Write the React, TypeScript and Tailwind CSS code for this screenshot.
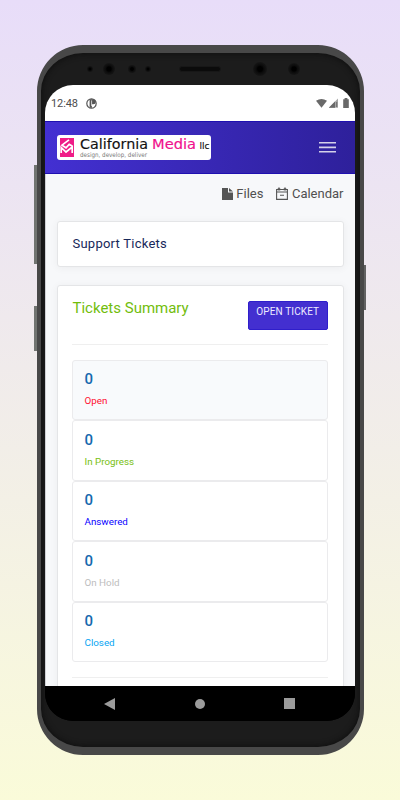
import clsx from "clsx";

interface TicketStatus {
  label: string;
  count: number;
  color: string;
}

const STATUSES: TicketStatus[] = [
  { label: "Open", count: 0, color: "text-[#ff1030]" },
  { label: "In Progress", count: 0, color: "text-[#78c010]" },
  { label: "Answered", count: 0, color: "text-[#0a00ff]" },
  { label: "On Hold", count: 0, color: "text-[#bdbdbd]" },
  { label: "Closed", count: 0, color: "text-[#08a5f2]" },
];

const Lens = ({ className }: { className: string }) => (
  <span
    className={clsx(
      "absolute rounded-full bg-[radial-gradient(circle,#000_25%,#0b0b0b_40%,#141414_65%)]",
      className
    )}
  />
);

const StatusBar = () => (
  <div className="flex h-9 shrink-0 items-center bg-white pl-[6.5px] pr-[5px] text-[#4c4c4c]">
    <span className="pt-px text-[11px] leading-4 tracking-[-0.1px]">12:48</span>
    <svg className="ml-[8px]" width="11" height="11" viewBox="0 0 11 11">
      <circle cx="5.5" cy="5.5" r="4.7" fill="none" stroke="#555" strokeWidth="1.2" />
      <path d="M3.6 1.2h3.6a2.2 2.2 0 0 1 0 5H6v3.6H3.6z" fill="#555" />
      <path d="M5.6 2.4v5.8" stroke="#eee" strokeWidth=".8" />
    </svg>
    <svg className="ml-auto" width="34" height="11" viewBox="0 0 34 11" fill="#696969">
      <path d="M0 2.8Q5.5-1 11 2.8L5.5 9.8z" />
      <path d="M22 .5v9.2h-9.2z" opacity=".6" />
      <path d="M19 3.5v6.2h-6.2zM20.2 4h1v5h-1z" />
      <path d="M28.6 0h2.8v1.2h1.4v8.7h-5.6V1.2h1.4z" />
    </svg>
  </div>
);

const Logo = () => (
  <svg
    className="rounded-[3px] bg-white"
    width="154"
    height="25"
    viewBox="0 0 154 25"
    fontFamily="'DejaVu Sans', sans-serif"
  >
    <path d="M3 3h14v19H3z" fill="#ef1c88" />
    <path
      d="M12 4.8L5 10.2l4 2.6 3.2-3.4 3 1.6M4.2 18v-5.5L9 17l6.2-5V18"
      fill="none"
      stroke="#fff"
      strokeWidth="1.7"
    />
    <g fill="#111" stroke="#111" strokeWidth=".15">
      <text x="23" y="13.8" fontSize="14.5" textLength="68" lengthAdjust="spacingAndGlyphs">
        California
      </text>
      <text x="142.5" y="13.8" fontSize="9.5" textLength="10" lengthAdjust="spacingAndGlyphs">
        llc
      </text>
    </g>
    <text
      x="95"
      y="13.8"
      fontSize="14.5"
      textLength="44"
      lengthAdjust="spacingAndGlyphs"
      fill="#f0108c"
      stroke="#f0108c"
      strokeWidth=".15"
    >
      Media
    </text>
    <text x="23" y="21.6" fontSize="6.4" textLength="67" lengthAdjust="spacingAndGlyphs" fill="#777">
      design, develop, deliver
    </text>
  </svg>
);

const Header = () => (
  <header className="flex h-[53px] shrink-0 items-center justify-between border-y border-[#1f10b0] bg-linear-to-r from-[#4330d2] to-[#2e209b] pl-3 pr-[19px]">
    <Logo />
    <svg width="17" height="11" viewBox="0 0 17 11" fill="#d4d1e9">
      <path d="M0 0h17v1.6H0zM0 4.6h17v1.6H0zM0 9h17v1.6H0z" />
    </svg>
  </header>
);

const QuickLinks = () => (
  <nav className="flex h-[15px] items-center justify-end text-[13px] text-[#505050]">
    <svg width="11" height="12" viewBox="0 0 11 12" fill="#555">
      <path d="M0 0h6v4.5h5V12H0zM7 0l4 3.6H7z" />
    </svg>
    <span className="ml-[3px] pt-px">Files</span>
    <svg
      className="ml-[13px]"
      width="12"
      height="13"
      viewBox="0 0 12 13"
      fill="none"
      stroke="#555"
    >
      <path d="M.6 2.5h10.8v9.9H.6zM.6 5h10.8M4 8.2h4" strokeWidth="1.1" />
      <path d="M2.3 3.5V1h1.4v2.5M8.3 3.5V1h1.4v2.5" strokeWidth="1" />
    </svg>
    <span className="ml-[3.5px] pt-px">Calendar</span>
  </nav>
);

const StatusItem = ({ label, count, color, active }: TicketStatus & { active: boolean }) => (
  <li
    className={clsx(
      "flex h-[60.5px] flex-col rounded-[3px] border border-[#ebebed] pl-[11.5px] pt-[8.5px]",
      active ? "bg-[#f8fafc]" : "bg-white"
    )}
  >
    <span className="text-[15px] font-medium leading-5 text-[#1569ae]">{count}</span>
    <span className={clsx("mt-[5px] text-[9.8px] leading-[14px]", color)}>{label}</span>
  </li>
);

const TicketsSummary = () => (
  <section className="mt-[18px] h-[430px] shrink-0 rounded-[3px] border border-[#e4e5e7] bg-white px-[14.5px] shadow-[0_1px_8px_rgba(0,0,0,0.05)]">
    <div className="flex h-[58.5px] items-start justify-between border-b border-[#efefef] pt-[14px]">
      <h2 className="pl-[0.5px] text-[15px] leading-[17px] text-[#72bd0c]">Tickets Summary</h2>
      <button className="mt-[0.5px] flex h-[29px] w-[80.5px] justify-center rounded-[2px] border border-[#2f1ecb] bg-[#432fd0] pt-[3.5px] text-[10px] leading-[14px] tracking-[0.12px] text-[#edeaff]">
        OPEN TICKET
      </button>
    </div>
    <ul className="mt-[15px]">
      {STATUSES.map((status, i) => (
        <StatusItem key={status.label} {...status} active={i === 0} />
      ))}
    </ul>
    <hr className="mt-[14.5px] border-[#efefef]" />
  </section>
);

const NavigationBar = () => (
  <div className="flex h-[35px] shrink-0 items-center justify-between bg-black pl-[59px] pr-[60px]">
    <svg width="11" height="12" viewBox="0 0 11 12" fill="#9b9b9b">
      <path d="M11 0v12L0 6z" />
    </svg>
    <span className="ml-px size-[10px] rounded-full bg-[#9b9b9b]" />
    <span className="size-[11px] bg-[#9b9b9b]" />
  </div>
);

export default function App() {
  return (
    <div className="flex h-[800px] w-[400px] justify-center bg-linear-to-b from-[#e8ddf9] to-[#fafbd9] pt-[45px] font-['Roboto',sans-serif]">
      <div className="relative flex h-[710px] w-[327px] flex-col px-2 pt-[40px]">
        {/* hardware buttons */}
        <span className="absolute -left-[3px] top-[120px] h-[99px] w-[3px] bg-[#717471]" />
        <span className="absolute -left-[3px] top-[261px] h-[45px] w-[3px] bg-[#717471]" />
        <span className="absolute -right-[2px] top-[220px] h-[45px] w-[2px] bg-[#626262]" />
        {/* front glass */}
        <span className="absolute inset-0 rounded-[46px] border-x-[4px] border-y-[8px] border-[#484848] bg-[#1c1c1c] shadow-[inset_0_0_6px_#0c0c0c]" />
        <Lens className="left-[50px] top-[21px] size-[6px]" />
        <Lens className="left-[66px] top-[18px] size-[12px]" />
        <Lens className="left-[91px] top-[20px] size-[8px]" />
        <Lens className="left-[108px] top-[21px] size-[6px]" />
        <span className="absolute left-[142px] top-[21px] h-[6px] w-[42px] rounded-full border border-[#171717] bg-[#0b0b0b]" />
        <Lens className="left-[216px] top-[17px] size-[14px]" />
        <Lens className="left-[251px] top-[18px] size-[12px]" />

        <main className="relative flex h-[636px] w-[310px] flex-col overflow-hidden rounded-[28px] bg-black">
          <StatusBar />
          <Header />
          <div className="flex min-h-0 flex-1 flex-col overflow-hidden border-l border-[#cfd0d4] bg-[#f7f8fa] pl-[11px] pr-[11px] pt-[12px]">
            <QuickLinks />
            <section className="mt-5 flex h-[46px] shrink-0 items-center rounded-[3px] border border-[#e4e5e7] bg-white px-[15px] text-[13px] tracking-[0.24px] text-[#17285a] shadow-[0_1px_8px_rgba(0,0,0,0.05)]">
              Support Tickets
            </section>
            <TicketsSummary />
          </div>
          <NavigationBar />
        </main>
      </div>
    </div>
  );
}
